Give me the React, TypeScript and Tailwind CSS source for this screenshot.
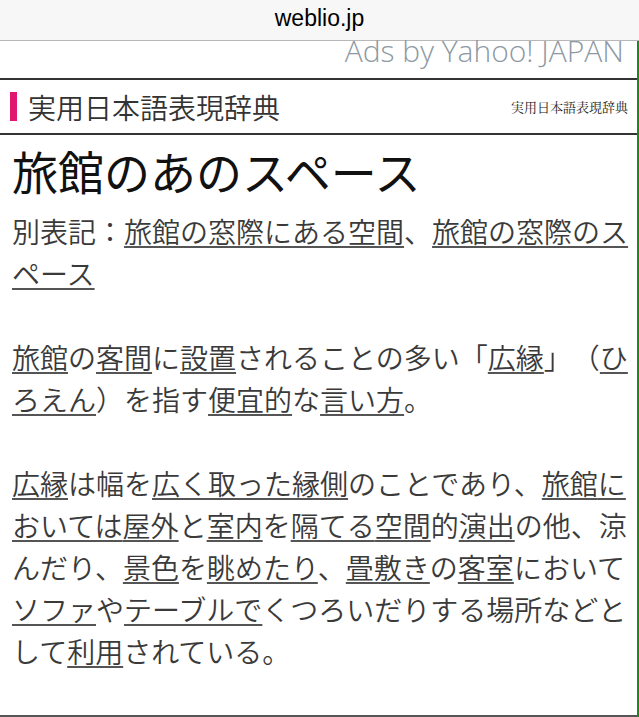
import React from "react";

const jp = "font-['Noto_Sans_CJK_JP',sans-serif] [text-spacing-trim:space-all]";
const link = "underline decoration-[#555] decoration-[1.5px] underline-offset-[3px]";

const L = ({ children }: { children: React.ReactNode }) => <span className={link}>{children}</span>;

export default function App() {
  return (
    <div className="w-[639px] h-[717px] bg-white overflow-hidden">
      {/* browser address bar */}
      <div className="h-[41px] bg-[#f7f7f7] border-b border-[#b8b8b8] flex items-center justify-center">
        <span className="font-['Liberation_Sans',sans-serif] text-[23px] text-black leading-none -mt-[4px]">weblio.jp</span>
      </div>

      <div className="h-[676px] border-r-2 border-[#1b8a1b] flex flex-col">
        <div className="h-[37px] shrink-0 pr-[13px] text-right">
          <span className="font-['Open_Sans',sans-serif] font-light text-[30px] leading-[20px] text-[#8e99a4]">
            Ads by Yahoo! JAPAN
          </span>
        </div>

        <div className="h-[57px] shrink-0 border-y-2 border-[#333] flex items-center justify-between pl-[10px] pr-[9px]">
          <div className="flex items-center gap-[11px]">
            <div className="w-[7px] h-[29px] bg-[#e0166f]" />
            <span className={`${jp} font-[350] text-[28px] text-[#333] leading-none`}>実用日本語表現辞典</span>
          </div>
          <span className="font-['Noto_Serif_CJK_JP','Noto_Sans_CJK_JP',serif] text-[13px] text-[#222] leading-none">
            実用日本語表現辞典
          </span>
        </div>

        <div className={`${jp} flex-1 pl-[12px] pr-[4px] pt-[7px] border-b-2 border-[#555]`}>
          <h1 className="text-[46px] leading-[56px] text-[#111] font-normal">旅館のあのスペース</h1>

          <div className="mt-[12px] text-[28px] leading-[42px] text-[#3a3a3a] font-[350]">
            <p>
              別表記：<L>旅館の窓際にある空間</L>、<L>旅館の窓際のスペース </L>
            </p>
            <p className="mt-[42px]">
              <L>旅館</L>の<L>客間</L>に<L>設置</L>されることの多い「<L>広縁</L>」（<L>ひろえん</L>）を指す<L>便宜的</L>な<L>言い方</L>。
            </p>
            <p className="mt-[42px]">
              <L>広縁</L>は幅を<L>広く取った</L><L>縁側</L>のことであり、<L>旅館</L><L>においては</L><L>屋外</L>と<L>室内</L>を<L>隔てる</L><L>空間</L>的<L>演出</L>の他、涼んだり、<L>景色</L>を<L>眺めたり</L>、<L>畳敷き</L>の<L>客室</L>において<L>ソファ</L>や<L>テーブルで</L>くつろいだりする場所などとして<L>利用</L>されている。
            </p>
          </div>
        </div>
      </div>
    </div>
  );
}
